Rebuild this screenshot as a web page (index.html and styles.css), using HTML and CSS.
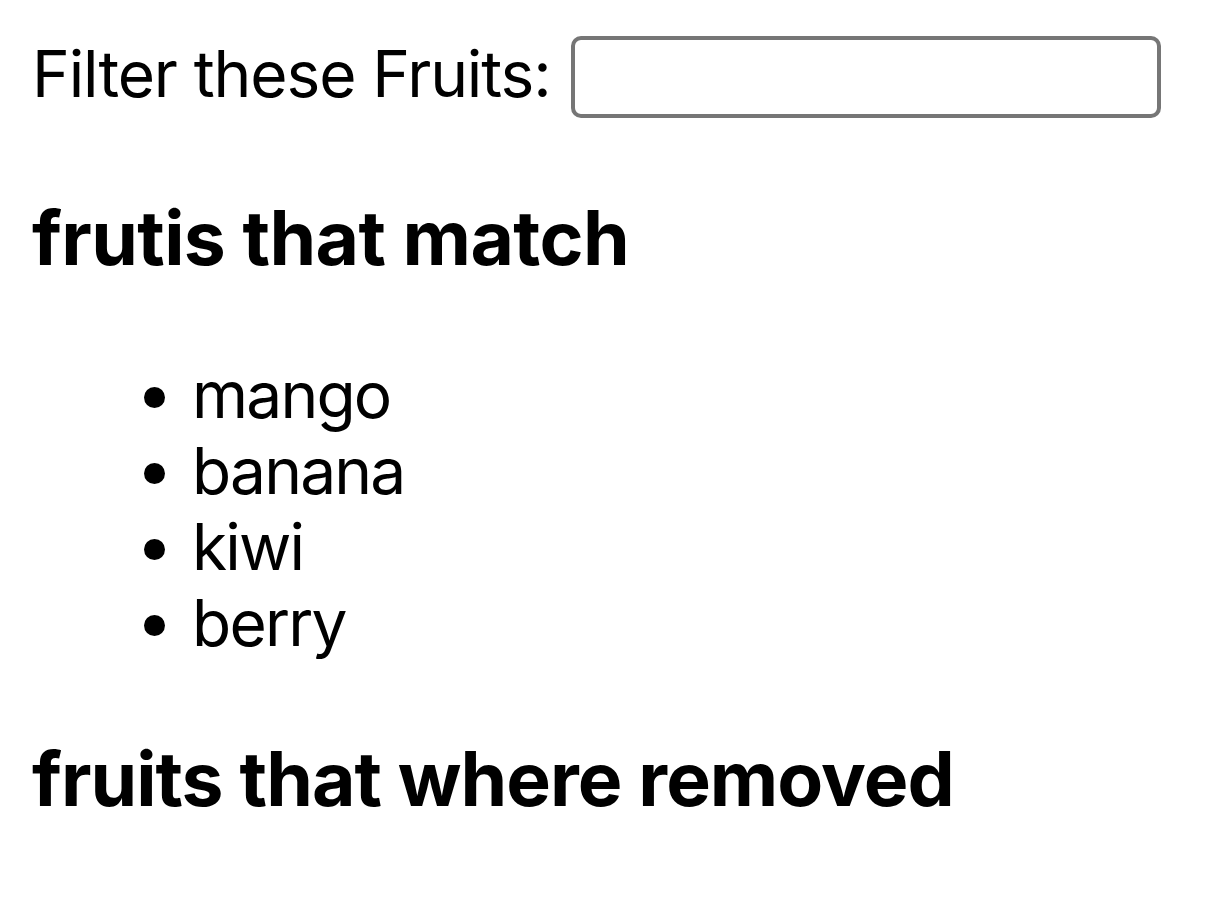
FILE: index.html
```html
<!DOCTYPE html>
<html>
<head>
<meta charset="utf-8">
<title>Fruits</title>
<link rel="stylesheet" href="styles.css">
</head>
<body>
<div class="filter-row">
  <label class="filter-label" for="q">Filter these Fruits:</label>
  <input class="filter-input" id="q" type="text">
</div>
<h3 class="section-title">frutis that match</h3>
<ul class="fruit-list">
  <li>mango</li>
  <li>banana</li>
  <li>kiwi</li>
  <li>berry</li>
</ul>
<h3 class="section-title section-title--after-list">fruits that where removed</h3>
</body>
</html>
```
FILE: styles.css
```css
html, body {
  background: #fff;
}
body {
  margin: 32px;
  font-family: Inter, "Noto Sans", sans-serif;
  font-size: 64px;
  color: #000;
  line-height: 1.19;
}
.filter-row {
  display: flex;
  align-items: flex-start;
  gap: 20px;
  margin-bottom: 2px;
}
.filter-label {
  line-height: 84px;
  letter-spacing: -1.1px;
  white-space: nowrap;
}
.filter-input {
  box-sizing: border-box;
  width: 590px;
  height: 82px;
  margin-top: 4px;
  border: 4px solid #767676;
  border-radius: 10px;
  background: #fff;
  padding: 0;
  font-size: 40px;
  flex: none;
}
.section-title {
  font-size: 75px;
  font-weight: 700;
  margin: 75px 0;
  letter-spacing: -0.6px;
}
.section-title--after-list {
  margin-top: 73px;
  letter-spacing: -0.95px;
}
.fruit-list {
  margin: 64px 0;
  padding-left: 160px;
  letter-spacing: -1.8px;
}
.fruit-list li {
  line-height: 76px;
}
```
